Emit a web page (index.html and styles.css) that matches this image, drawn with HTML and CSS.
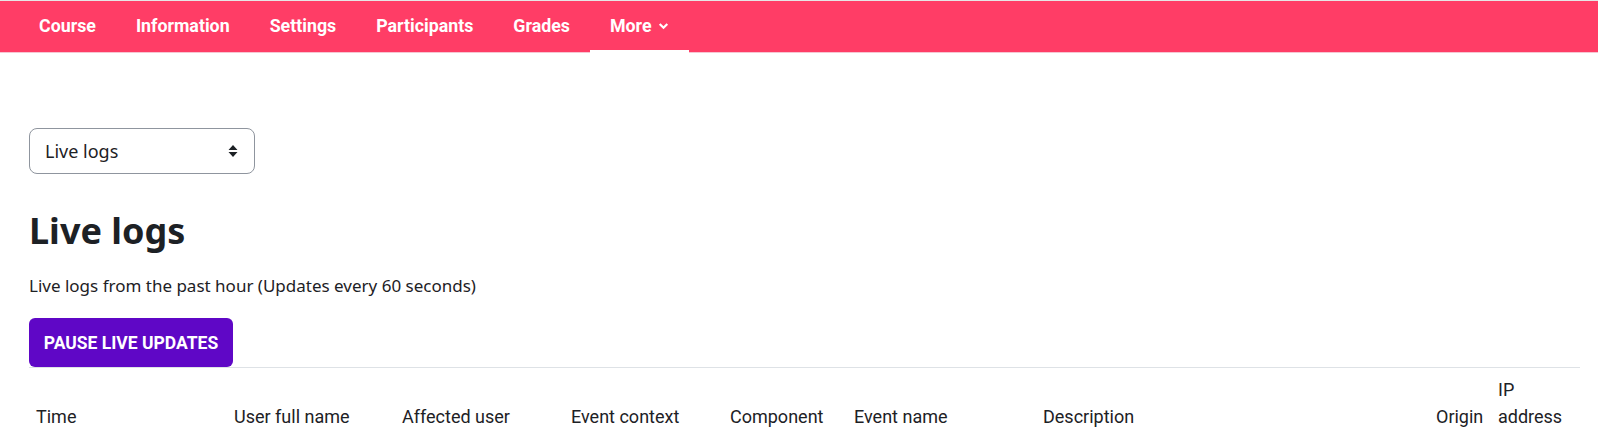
FILE: index.html
```html
<!DOCTYPE html>
<html>
  <head>
    <meta charset="utf-8">
    <title>Live logs</title>
    <link rel="stylesheet" href="styles.css">
  </head>
  <body>
    <!-- Barra de navegación secundaria -->
    <nav class="secnav">
      <a class="navitem" href="#">Course</a>
      <a class="navitem" href="#">Information</a>
      <a class="navitem" href="#">Settings</a>
      <a class="navitem" href="#">Participants</a>
      <a class="navitem" href="#">Grades</a>
      <a class="navitem active" href="#">More
        <svg class="caret" width="11" height="8" viewBox="0 0 11 8"><path d="M1.7 2 L5.5 5.8 L9.3 2" fill="none" stroke="#fff" stroke-width="2.2"/></svg>
      </a>
    </nav>

    <div class="page">
      <!-- Selector de informe -->
      <div class="selectbox">
        <span>Live logs</span>
        <svg class="updown" width="10" height="14" viewBox="0 0 10 14"><path d="M5 1 L9.5 6 H0.5 Z M5 13 L9.5 8 H0.5 Z" fill="#1d2125"/></svg>
      </div>

      <h1 class="title">Live logs</h1>
      <p class="intro">Live logs from the past hour (Updates every 60 seconds)</p>

      <button class="pausebtn">PAUSE LIVE UPDATES</button>

      <table class="logtable">
        <thead>
          <tr>
            <th class="c-time">Time</th>
            <th class="c-user">User full name</th>
            <th class="c-affected">Affected user</th>
            <th class="c-context">Event context</th>
            <th class="c-component">Component</th>
            <th class="c-event">Event name</th>
            <th class="c-desc">Description</th>
            <th class="c-origin">Origin</th>
            <th class="c-ip">IP address</th>
          </tr>
        </thead>
      </table>
    </div>
  </body>
</html>
```

FILE: styles.css
```css
body {
  margin: 0;
  font-family: "Noto Sans", Arial, sans-serif;
  color: #1d2125;
  background: #fff;
}

.secnav {
  display: flex;
  height: 51px;
  margin-right: 2px;
  padding-left: 19px;
  background: #ff3d66;
  border-top: 1px solid #e6e6e6;
  border-bottom: 1px solid #f6c6d2;
}

.navitem {
  display: flex;
  align-items: center;
  gap: 6px;
  padding: 0 20px;
  color: #fff;
  font-family: Roboto, sans-serif;
  font-weight: 700;
  font-size: 17.8px;
  text-decoration: none;
  border-bottom: 3px solid transparent;
  margin-bottom: -1px;
}

.navitem.active {
  border-bottom-color: #fff;
}

.page {
  padding: 75px 20px 0 29px;
}

.selectbox {
  display: flex;
  align-items: center;
  justify-content: space-between;
  box-sizing: border-box;
  width: 226px;
  height: 46px;
  padding: 0 16px 0 15px;
  border: 1px solid #8f959e;
  border-radius: 8px;
  font-size: 18px;
}

.title {
  margin: 34px 0 0;
  font-size: 36px;
  font-weight: 700;
  line-height: 46px;
}

.intro {
  margin: 20px 0 0;
  font-size: 17px;
  line-height: 24px;
}

.pausebtn {
  display: block;
  width: 204px;
  height: 49px;
  margin-top: 20px;
  padding: 0;
  border: none;
  border-radius: 6px;
  background: #5f07c6;
  color: #fff;
  font-family: Roboto, sans-serif;
  font-weight: 700;
  font-size: 17.5px;
}

.logtable {
  width: 100%;
  table-layout: fixed;
  border-collapse: collapse;
  border-top: 1px solid #dee2e6;
}

.logtable th {
  box-sizing: border-box;
  padding: 8px 7px 11px;
  text-align: left;
  vertical-align: bottom;
  font-family: Roboto, sans-serif;
  font-weight: 400;
  font-size: 18px;
  line-height: 27px;
}

.c-time { width: 198px; }
.c-user { width: 168px; }
.c-affected { width: 169px; }
.c-context { width: 159px; }
.c-component { width: 124px; }
.c-event { width: 189px; }
.c-desc { width: 393px; }
.c-origin { width: 62px; }
.c-ip { width: 89px; }
```
